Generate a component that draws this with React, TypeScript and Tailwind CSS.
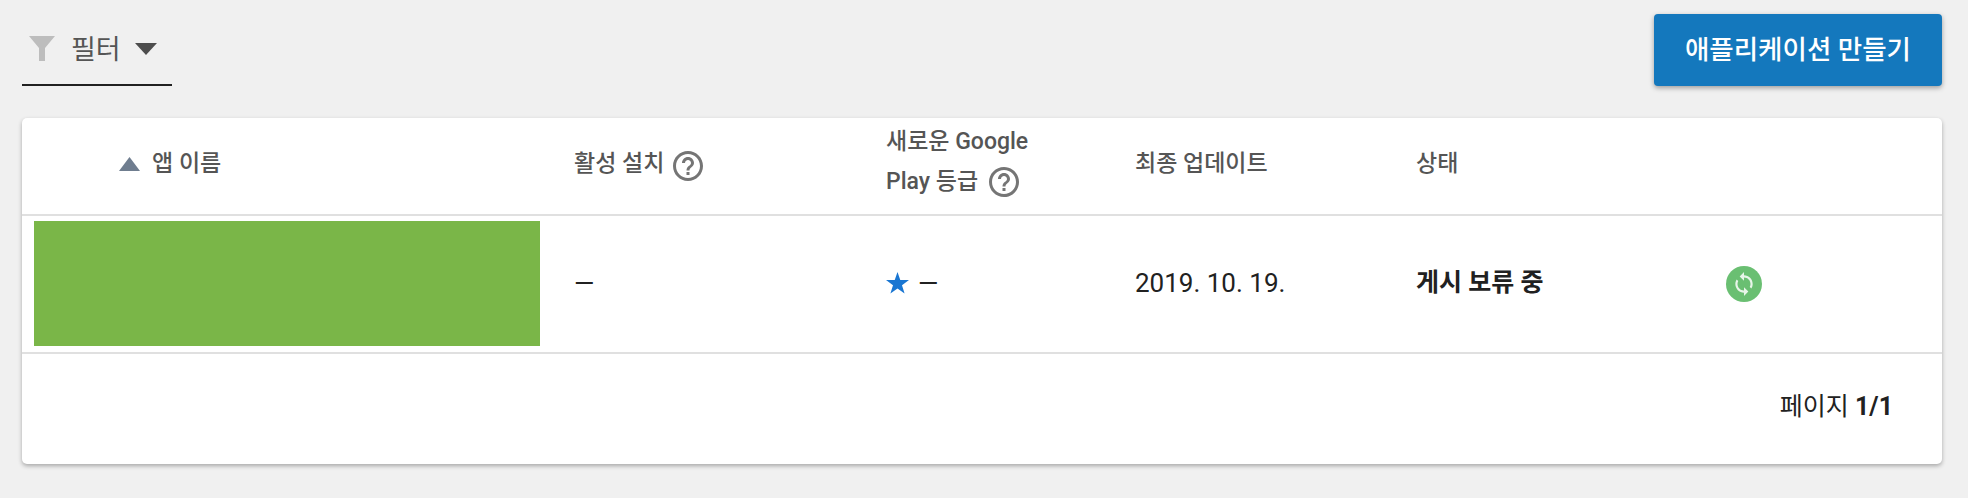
function HelpIcon() {
  return (
    <svg className="inline-block w-9 h-9 shrink-0" viewBox="0 0 24 24" fill="#757575">
      <path d="M11 18h2v-2h-2v2zm1-16C6.48 2 2 6.48 2 12s4.48 10 10 10 10-4.48 10-10S17.52 2 12 2zm0 18c-4.41 0-8-3.59-8-8s3.59-8 8-8 8 3.59 8 8-3.59 8-8 8zm0-14c-2.21 0-4 1.79-4 4h2c0-1.1.9-2 2-2s2 .9 2 2c0 2-3 1.75-3 5h2c0-2.25 3-2.5 3-5 0-2.21-1.79-4-4-4z" />
    </svg>
  );
}

export default function App() {
  return (
    <div className="min-h-screen bg-[#f0f0f0] pt-[14px] pl-[22px] pr-[26px] font-['Roboto','Noto_Sans_CJK_KR',sans-serif]">
      {/* Top bar */}
      <div className="flex items-start justify-between h-[72px] mb-[32px]">
        <div className="flex items-center w-[150px] h-[72px] border-b-2 border-[#212121] pl-[7px]">
          <svg className="w-[26px] h-[26px] shrink-0" viewBox="0 0 26 26" fill="#bdbdbd">
            <path d="M0 0h26L16 12v13h-6V12z" />
          </svg>
          <span className="ml-[16px] pt-[2px] text-[27px] text-[#555555]">필터</span>
          <svg className="ml-[14px] w-[22px] h-[12px] shrink-0" viewBox="0 0 22 12" fill="#4d4d4d">
            <path d="M0 0h22L11 12z" />
          </svg>
        </div>
        <button className="w-[288px] h-[72px] rounded-[4px] bg-[#1478bd] text-white text-[26.5px] font-medium shadow-[0_2px_5px_rgba(0,0,0,0.35)]">
          애플리케이션 만들기
        </button>
      </div>

      {/* Table card */}
      <div className="bg-white rounded-[5px] shadow-[0_2px_4px_rgba(0,0,0,0.3)]">
        <div className="grid grid-cols-[552px_312px_249px_281px_310px_1fr] h-[98px] items-center border-b-2 border-[#e0e0e0] text-[23px] font-medium text-[#555555]">
          <div className="flex items-center pl-[97px] pb-[4px]">
            <svg className="w-[21px] h-[14px] shrink-0" viewBox="0 0 21 14" fill="#6f7d8f">
              <path d="M10.5 0L21 14H0z" />
            </svg>
            <span className="ml-[12px]">앱 이름</span>
          </div>
          <div className="flex items-center">
            <span className="pb-[4px]">활성 설치</span>
            <span className="ml-[6px] flex"><HelpIcon /></span>
          </div>
          <div className="leading-[40px] pb-[8px]">
            <div>새로운 Google</div>
            <div className="flex items-center">Play 등급<span className="ml-[8px] flex"><HelpIcon /></span></div>
          </div>
          <div className="pb-[4px]">최종 업데이트</div>
          <div className="pb-[4px]">상태</div>
          <div />
        </div>

        <div className="grid grid-cols-[552px_312px_249px_281px_310px_1fr] h-[138px] items-center border-b-2 border-[#e0e0e0] text-[26px] text-[#212121]">
          <div className="pl-[12px] pb-[2px]">
            <div className="w-[506px] h-[125px] bg-[#7ab648]" />
          </div>
          <div className="pb-[2px]">—</div>
          <div className="flex items-center pb-[2px]">
            <svg className="w-[23px] h-[22px] shrink-0" viewBox="0 0 24 23" fill="#1976d2">
              <path d="M12 0l2.9 8.4H24l-7.3 5.4 2.7 8.8L12 17.2l-7.4 5.4 2.7-8.8L0 8.4h9.1z" />
            </svg>
            <span className="ml-[9px]">—</span>
          </div>
          <div className="pb-[2px]">2019. 10. 19.</div>
          <div className="font-bold text-[25px] pb-[2px]">게시 보류 중</div>
          <div>
            <div className="flex items-center justify-center w-[36px] h-[36px] rounded-full bg-[#6abf72]">
              <svg className="w-[26px] h-[26px]" viewBox="0 0 24 24" fill="#e8f5e9">
                <path d="M12 4V1L8 5l4 4V6c3.31 0 6 2.69 6 6 0 1.01-.25 1.97-.7 2.8l1.46 1.46C19.54 15.03 20 13.57 20 12c0-4.42-3.58-8-8-8zm0 14c-3.31 0-6-2.69-6-6 0-1.01.25-1.97.7-2.8L5.24 7.74C4.46 8.97 4 10.43 4 12c0 4.42 3.58 8 8 8v3l4-4-4-4v3z" />
              </svg>
            </div>
          </div>
        </div>

        <div className="flex justify-end h-[110px] pt-[38px] pr-[49px] text-[25px] leading-[30px] text-[#212121]">
          <span>페이지 <span className="font-bold">1/1</span></span>
        </div>
      </div>
    </div>
  );
}
